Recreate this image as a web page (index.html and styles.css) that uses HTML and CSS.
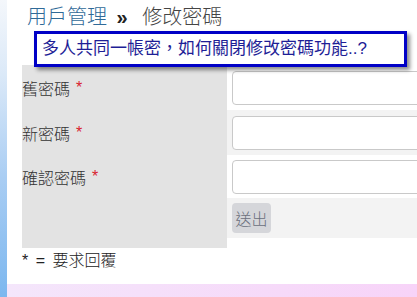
FILE: index.html
```html
<html>
  <head>
    <meta http-equiv="content-type" content="text/html; charset=UTF-8">
    <title>修改密碼</title>
    <link rel="stylesheet" href="styles.css">
  </head>
  <body>
    <div class="page">
      <div class="crumb"><a class="crumb_link" href="#">用戶管理</a> <span class="sep">»</span> 修改密碼</div>
      <div class="tip">多人共同一帳密，如何關閉修改密碼功能..?</div>
      <form class="pwform" action="#" method="POST">
        <div class="lbl">舊密碼 <span class="req">*</span></div>
        <div class="fld"><input class="inp" type="password" name="old" /></div>
        <div class="lbl">新密碼 <span class="req">*</span></div>
        <div class="fld alt"><input class="inp" type="password" name="new" /></div>
        <div class="lbl">確認密碼 <span class="req">*</span></div>
        <div class="fld"><input class="inp" type="password" name="confirm" /></div>
        <div class="lbl"></div>
        <div class="fld alt btnrow"><input class="btn" type="submit" value="送出" /></div>
      </form>
      <p class="note">* = 要求回覆</p>
      <div class="band"></div>
    </div>
  </body>
</html>
```

FILE: styles.css
```css
html, body { height:100%; }
body { margin:0; font-family:"Liberation Sans", "Noto Sans CJK TC", sans-serif; font-weight:300; color:#333;
  background:linear-gradient(#f4f7fb 0, #dbe9f8 25%, #a9cdf3 60%, #7cb7ef 100%); }
.page { margin-left:7px; height:297px; background:#fff; display:flex; flex-direction:column; overflow:hidden; }
.crumb { padding:4px 0 0 20px; font-size:20px; line-height:27px; color:#444; }
.crumb_link { color:#2f6a98; text-decoration:none; }
.sep { margin:0 9px 0 4px; font-weight:700; color:#222; }
.tip { margin:0 0 -2px 27px; width:362px; height:30px; border:3px solid #0000c6; background:#fff;
  box-shadow:3px 3px 4px rgba(0,0,0,0.45); font-size:17px; font-weight:400; line-height:30px; padding-left:5px;
  color:#1e1e96; position:relative; z-index:1; white-space:nowrap; }
.pwform { margin:0 0 0 15px; display:grid; grid-template-columns:205px 1fr; grid-template-rows:45px 45px 43px 50px; }
.lbl { background:#e3e3e3; font-size:16px; color:#333; display:flex; align-items:center; }
.req { color:#d9232e; margin-left:6px; }
.fld { display:flex; align-items:center; padding-left:5px; background:#fff; }
.fld.alt { background:#f3f3f3; }
.inp { width:260px; height:34px; border:1px solid #c9c9c9; border-radius:4px; background:#fff; box-sizing:border-box; }
.btnrow { align-self:start; height:40px; }
.btn { width:39px; height:30px; border:0; border-radius:4px; background:#d5d6da; color:#6a6f7c;
  font-family:"Noto Sans CJK TC", sans-serif; font-weight:300; font-size:16px; padding:0; }
.note { margin:1px 0 0 15px; font-size:16px; line-height:24px; color:#222; word-spacing:3px; }
.band { margin-top:auto; height:13px; background:linear-gradient(to right, #f4e6fb, #f7d3f8); }
```
